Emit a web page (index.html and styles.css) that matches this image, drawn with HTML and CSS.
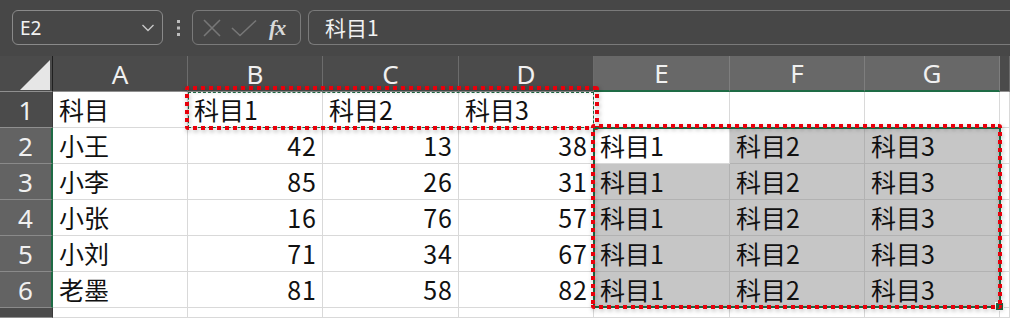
FILE: index.html
```html
<!DOCTYPE html>
<html lang="zh">
<head>
<meta charset="utf-8">
<title>成绩表</title>
<link rel="stylesheet" href="styles.css">
</head>
<body>
  <div class="toolbar">
    <div class="namebox">
      <span>E2</span>
      <svg class="chevron" width="14" height="10" viewBox="0 0 14 10"><path d="M1.5 2 L7 7.5 L12.5 2" fill="none" stroke="#c8c8c8" stroke-width="1.4"/></svg>
    </div>
    <svg class="grip" width="6" height="20" viewBox="0 0 6 20"><rect x="1" y="2" width="3" height="3" fill="#bdbdbd"/><rect x="1" y="8.5" width="3" height="3" fill="#bdbdbd"/><rect x="1" y="15" width="3" height="3" fill="#bdbdbd"/></svg>
    <div class="fxbox">
      <svg width="18" height="18" viewBox="0 0 18 18"><path d="M1 1 L17 17 M17 1 L1 17" stroke="#777" stroke-width="1.6" fill="none"/></svg>
      <svg width="26" height="18" viewBox="0 0 26 18"><path d="M1 9 L9 16.5 L25 1.5" stroke="#777" stroke-width="1.6" fill="none"/></svg>
      <i class="fx">fx</i>
    </div>
    <div class="formula">科目1</div>
  </div>

  <div class="sheet">
    <div class="grid">
      <div class="corner"><span class="tri"></span></div>
      <div class="colhead">A</div>
      <div class="colhead">B</div>
      <div class="colhead">C</div>
      <div class="colhead">D</div>
      <div class="colhead sel">E</div>
      <div class="colhead sel">F</div>
      <div class="colhead sel">G</div>
      <div class="colhead"></div>

      <div class="rowhead">1</div>
      <div class="cell">科目</div>
      <div class="cell">科目1</div>
      <div class="cell">科目2</div>
      <div class="cell">科目3</div>
      <div class="cell"></div>
      <div class="cell"></div>
      <div class="cell"></div>
      <div class="cell"></div>

      <div class="rowhead sel">2</div>
      <div class="cell">小王</div>
      <div class="cell num">42</div>
      <div class="cell num">13</div>
      <div class="cell num">38</div>
      <div class="cell active">科目1</div>
      <div class="cell sel">科目2</div>
      <div class="cell sel">科目3</div>
      <div class="cell"></div>

      <div class="rowhead sel">3</div>
      <div class="cell">小李</div>
      <div class="cell num">85</div>
      <div class="cell num">26</div>
      <div class="cell num">31</div>
      <div class="cell sel">科目1</div>
      <div class="cell sel">科目2</div>
      <div class="cell sel">科目3</div>
      <div class="cell"></div>

      <div class="rowhead sel">4</div>
      <div class="cell">小张</div>
      <div class="cell num">16</div>
      <div class="cell num">76</div>
      <div class="cell num">57</div>
      <div class="cell sel">科目1</div>
      <div class="cell sel">科目2</div>
      <div class="cell sel">科目3</div>
      <div class="cell"></div>

      <div class="rowhead sel">5</div>
      <div class="cell">小刘</div>
      <div class="cell num">71</div>
      <div class="cell num">34</div>
      <div class="cell num">67</div>
      <div class="cell sel">科目1</div>
      <div class="cell sel">科目2</div>
      <div class="cell sel">科目3</div>
      <div class="cell"></div>

      <div class="rowhead sel">6</div>
      <div class="cell">老墨</div>
      <div class="cell num">81</div>
      <div class="cell num">58</div>
      <div class="cell num">82</div>
      <div class="cell sel">科目1</div>
      <div class="cell sel">科目2</div>
      <div class="cell sel">科目3</div>
      <div class="cell"></div>

      <div class="rowhead"></div>
      <div class="cell"></div>
      <div class="cell"></div>
      <div class="cell"></div>
      <div class="cell"></div>
      <div class="cell"></div>
      <div class="cell"></div>
      <div class="cell"></div>
      <div class="cell"></div>
    </div>

    <!-- copied range B1:D1 -->
    <div class="ants"></div>
    <div class="mark copy"></div>
    <!-- pasted range E2:G6 -->
    <div class="range"><span class="handle"></span></div>
    <div class="mark paste"></div>
  </div>
</body>
</html>
```

FILE: styles.css
```css
body { margin:0; background:#474747; overflow:hidden; font-family: "Noto Sans CJK JP", "Noto Sans", sans-serif; }

.toolbar {
  height:56px; box-sizing:border-box; padding:10px 0 0 12px;
  display:flex; align-items:flex-start;
}
.namebox {
  width:151px; height:35px; box-sizing:border-box;
  border:1px solid #8a8a8a; border-radius:6px;
  display:flex; align-items:center; justify-content:space-between;
  padding:0 7px 0 7px; color:#f2f2f2; font:19px "Noto Sans", sans-serif;
}
.grip { margin:8px 0 0 13px; }
.fxbox {
  margin-left:10px; width:109px; height:35px; box-sizing:border-box;
  border:1px solid #7a7a7a; border-radius:6px;
  display:flex; align-items:center; padding:0 0 0 10px; gap:10px;
}
.fx { font:italic bold 22px "Liberation Serif", serif; color:#d8d8d8; margin-left:2px; letter-spacing:-1px; }
.formula {
  margin-left:7px; flex:1; height:35px; box-sizing:border-box;
  border:1px solid #7a7a7a; border-right:none; border-radius:6px 0 0 6px;
  color:#f2f2f2; font-size:21px; line-height:32px; padding-left:16px;
}

.sheet { position:relative; }
.grid {
  display:grid;
  grid-template-columns: 53px 135px 135px 136px 135px 136px 135px 135px 10px;
  grid-template-rows: 36px repeat(6, 36px) 10px;
  background:#fff;
}
.corner {
  background:#4b4b4b; border-right:1px solid #1f1f1f; border-bottom:1px solid #8f8f8f;
  position:relative;
}
.tri {
  position:absolute; left:20px; top:4px; width:0; height:0;
  border-left:30px solid transparent; border-bottom:30px solid #e6e6e6;
}
.colhead {
  background:#4b4b4b; color:#f0f0f0; font:26px "Noto Sans", sans-serif;
  display:flex; align-items:flex-end; justify-content:center; line-height:34px;
  border-right:1px solid #6c6c6c; border-bottom:1px solid #8f8f8f;
}
.colhead.sel { background:#686868; border-bottom:2px solid #1e6b45; border-right-color:#7e7e7e; }
.rowhead {
  background:#4b4b4b; color:#f0f0f0; font:26px "Noto Sans", sans-serif;
  display:flex; align-items:center; justify-content:center;
  border-bottom:1px solid #8f8f8f; border-right:1px solid #3a3a3a;
}
.rowhead.sel { background:#636363; border-right:2px solid #1e6b45; border-bottom-color:#8a8a8a; }
.cell {
  border-right:1px solid #d9d9d9; border-bottom:1px solid #d9d9d9;
  font-size:25px; color:#111; line-height:35px; padding-left:6px;
  white-space:nowrap; overflow:hidden;
}
.cell.num { text-align:right; padding:0 5px 0 0; letter-spacing:1px; }
.cell.sel { background:#c6c6c6; border-color:#b2b2b2; }
.cell.active { background:#fff; }

.ants {
  position:absolute; left:188px; top:36px; width:406px; height:36px; box-sizing:border-box;
  border:1px dashed #1e6b45;
}
/* square red dots on all four edges */
.mark {
  position:absolute; pointer-events:none; border-radius:3px;
  --dot: #e8000b;
  background:
    repeating-linear-gradient(90deg, var(--dot) 0 4px, transparent 4px 8px) top left / 100% 4px no-repeat,
    repeating-linear-gradient(90deg, var(--dot) 0 4px, transparent 4px 8px) bottom left / 100% 4px no-repeat,
    repeating-linear-gradient(180deg, var(--dot) 0 4px, transparent 4px 8px) top left / 4px 100% no-repeat,
    repeating-linear-gradient(180deg, var(--dot) 0 4px, transparent 4px 8px) top right / 4px 100% no-repeat;
  filter: drop-shadow(1px 2px 2px rgba(0,0,0,0.3));
}
.copy { left:185px; top:30px; width:414px; height:44px; }
.paste { left:591px; top:68px; width:411px; height:185px; }
.range {
  position:absolute; left:593px; top:71px; width:408px; height:181px; box-sizing:border-box;
  border:2px solid #1e6b45;
}
.handle {
  position:absolute; right:-5px; bottom:-5px; width:7px; height:7px;
  background:#1e6b45; border:1px solid #fff;
}
```
